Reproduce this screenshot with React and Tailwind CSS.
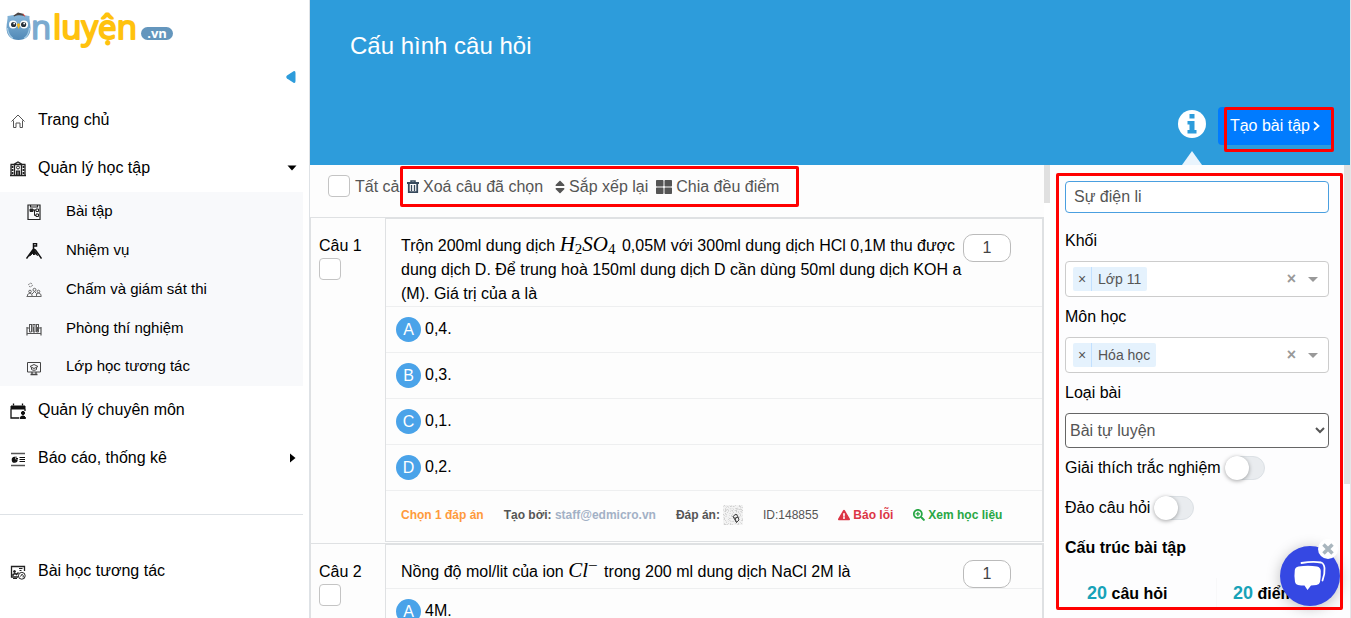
import React from "react";
import {
  FaSort,
  FaThLarge,
  FaExclamationTriangle,
  FaSearchPlus,
} from "react-icons/fa";

function Logo() {
  return (
    <svg width="170" height="44" viewBox="0 0 170 44" role="img" aria-label="Ôn luyện .vn">
      <defs>
        <linearGradient id="owl" x1="0" y1="0" x2="0" y2="1">
          <stop offset="0" stopColor="#86b6da" />
          <stop offset="1" stopColor="#5088b6" />
        </linearGradient>
      </defs>
      <path d="M1.500 8C4 7.500 7 7 12.500 7S21 7.500 23.500 8C23 11 24.500 15 24.500 20C24.500 28 19.500 32 12.500 32S0.500 28 0.500 20C0.500 15 2 11 1.500 8Z" fill="url(#owl)" />
      <path d="M7.500 7.500L12 4.500L18 6V8C15 7 11 7 8 8.500Z" fill="#4a4545" />
      <path d="M17 6L19 8.500" stroke="#d9534f" strokeWidth="1.200" />
      <circle cx="7" cy="16.500" r="4" fill="#fff" />
      <circle cx="18" cy="16.500" r="4" fill="#fff" />
      <circle cx="7.600" cy="16.500" r="2.600" fill="#26303b" />
      <circle cx="17.600" cy="16.500" r="2.600" fill="#26303b" />
      <circle cx="8.200" cy="15.500" r="0.900" fill="#fff" />
      <circle cx="18.200" cy="15.500" r="0.900" fill="#fff" />
      <path d="M10.800 16.500L12.500 15L14.300 16.500L12.600 21Z" fill="#f6b51e" />
      <path d="M1.500 20C2 25 4 28.500 7 30.500M23.500 20C23 25 21 28.500 18 30.500" stroke="#a5cce6" strokeWidth="1.200" fill="none" />
      <text x="25" y="31" fontFamily="Open Sans, sans-serif" fontWeight="400" fontSize="33" fill="#7aaacf" stroke="#7aaacf" strokeWidth="1.600" strokeLinejoin="round">n</text>
      <text x="47" y="31" fontFamily="Open Sans, sans-serif" fontWeight="400" fontSize="33" fill="#ffc20e" stroke="#ffc20e" strokeWidth="2" strokeLinejoin="round">luyện</text>
      <rect x="135" y="19" width="32" height="13" rx="6.500" fill="#6496bd" />
      <text x="151" y="29.500" textAnchor="middle" fontFamily="Open Sans, sans-serif" fontWeight="700" fontSize="13" fill="#fff">.vn</text>
    </svg>
  );
}

function Glyph({ children, color = "#222" }) {
  return (
    <svg className="size-4 shrink-0" viewBox="0 0 16 16" fill="none" stroke={color} strokeWidth="1" aria-hidden="true">
      {children}
    </svg>
  );
}

const HomeGlyph = () => (
  <Glyph color="#555">
    <path d="M1.500 8.500L8 2L14.500 8.500M3.500 7.500V14.500H6V10H10V14.500H12.500V7.500" />
  </Glyph>
);
const SchoolGlyph = () => (
  <Glyph>
    <path d="M0.500 3.500H15.500M1 3.500V14.500H15V3.500M4.500 3.500V14.500M11.500 3.500V14.500M3.500 3.500L8 1L12.500 3.500M0 14.500H16" strokeWidth="1.300" />
    <path d="M2.500 5V13.500M13.500 5V13.500" strokeDasharray="2 1" strokeWidth="1.800" />
    <path d="M6.500 14V10H9.500V14M8 10V14" strokeWidth="1.200" />
    <circle cx="8" cy="6.500" r="1.500" />
  </Glyph>
);
const TaskGlyph = () => (
  <Glyph>
    <path d="M2 1H14V15.500H2ZM4.500 1V3H11.500V1" strokeWidth="1.200" />
    <path d="M4 5H7V7.500H4Z" fill="#222" />
    <path d="M7 6H10M8.500 6V11.500H10M10 5H12.500V7.500H10ZM10 10H12.500V12.500H10Z" />
  </Glyph>
);
const MissionGlyph = () => (
  <Glyph color="#111">
    <path d="M0.500 15.500L7.500 6V0.500H10.500V3H8M7.500 6L9.500 7L15.500 15.500" strokeWidth="1.500" />
    <path d="M5.500 9L7.500 6.500L10.500 10L11.500 12.500L9 10.500L8 12L6.500 10.500L3.500 13Z" fill="#111" />
  </Glyph>
);
const ExamGlyph = () => (
  <Glyph color="#666">
    <circle cx="4.500" cy="3" r="1.800" strokeDasharray="1.500 1" />
    <circle cx="4" cy="9.500" r="1.300" />
    <circle cx="8.500" cy="7.800" r="1.500" />
    <circle cx="12.500" cy="9.500" r="1.300" />
    <path d="M0.500 14.500H15.500M1.500 14V12.500L4 11L6 12.500V14M6 12L8.500 9.500L10.500 11.500V14M11 12L12.500 11L15 12.500V14" />
  </Glyph>
);
const LabGlyph = () => (
  <Glyph color="#555">
    <path d="M1 6V14.500M15 6V14.500M1 12.500H15M1 7H3M13 7H15" strokeWidth="1.200" />
    <path d="M3.500 3.500V11H5.500V3.500M7 3.500V11H9V3.500M10.500 3.500V11H12.500V3.500M3 3.500H6M6.500 3.500H9.500M10 3.500H13M7.500 6V10.500M11.500 6V10.500" />
  </Glyph>
);
const ClassGlyph = () => (
  <Glyph color="#444">
    <path d="M1.500 2.500H14.500V12H1.500Z" />
    <path d="M6 12V14.500H10V12M4.500 14.500H11.500" strokeWidth="1.300" />
    <path d="M4 6.500L8 4.500L12 6.500L8 8.500ZM5.500 7.500V9.500C7 10.500 9 10.500 10.500 9.500V7.500" />
  </Glyph>
);
const CalendarGlyph = () => (
  <Glyph color="#111">
    <path d="M1 3H15V6H1Z" fill="#111" />
    <path d="M3.500 0.500V2.500M12.500 0.500V2.500M1 6V15H9M15 6V8" strokeWidth="1.300" />
    <circle cx="13" cy="10" r="1.600" fill="#111" />
    <path d="M10 15.500V14.500L12 13H14L15.500 14.500V15.500Z" fill="#111" />
  </Glyph>
);
const ReportGlyph = () => (
  <Glyph color="#111">
    <path d="M1 2.500H15M1 14.500H15" strokeWidth="1.400" stroke="#555" />
    <path d="M9.500 6.500H15M9.500 8.500H15M9.500 10.500H15" strokeWidth="1.200" />
    <path d="M4.500 6.500A2.300 2.300 0 1 0 7 9H4.500Z" fill="#111" strokeWidth="1.400" />
    <path d="M6 5.500V7.500H8" />
  </Glyph>
);
const LessonGlyph = () => (
  <Glyph color="#222">
    <path d="M8 13H1.500V2.500H14.500V7" strokeWidth="1.300" />
    <path d="M9 4.500H12.500M9.500 6.500H11.500M3 14.500H7" />
    <circle cx="4.500" cy="7.500" r="1" fill="#222" />
    <path d="M3 12V10.500L5 9.500L6.500 10.500L8.500 8.500" strokeWidth="1.500" />
    <circle cx="11.800" cy="11.800" r="3.400" />
    <path d="M10.500 12.500L12 10.200L13.200 11.500V13.500" />
  </Glyph>
);

const TrashGlyph = () => (
  <svg width="12" height="14" viewBox="0 0 12 14" fill="none" stroke="#36495c" aria-hidden="true">
    <path d="M0 3H12" strokeWidth="2" />
    <path d="M4 2.500V1H8V2.500" strokeWidth="1.500" />
    <path d="M1.800 4V12.200H10.200V4" strokeWidth="1.800" />
    <path d="M4.500 5V11M7.500 5V11" strokeWidth="1.300" />
  </svg>
);

const InfoGlyph = () => (
  <svg width="28" height="28" viewBox="0 0 28 28" aria-hidden="true">
    <circle cx="14" cy="14" r="14" fill="#fff" />
    <path d="M11.500 4H16.500V8.500H11.500ZM9.500 11H16.500V20H18.500V23.500H9.500V20H11.500V14.500H9.500Z" fill="#2d9cdb" />
  </svg>
);

const SUB_ITEMS = [
  ["Bài tập", TaskGlyph],
  ["Nhiệm vụ", MissionGlyph],
  ["Chấm và giám sát thi", ExamGlyph],
  ["Phòng thí nghiệm", LabGlyph],
  ["Lớp học tương tác", ClassGlyph],
];

function NavItem({ icon: Icon, label, children }) {
  return (
    <a href="#" className="flex h-12 items-center gap-3 pl-2.5 pr-1.5 text-base text-black">
      <span className="pt-0.5"><Icon /></span>
      <span className="flex-1">{label}</span>
      {children}
    </a>
  );
}

function Sidebar() {
  return (
    <aside className="flex w-[310px] shrink-0 flex-col border-r border-[#dee2e6] bg-white pr-1.5">
      <a href="#" className="mt-2 ml-[6px] block w-[170px]"><Logo /></a>
      <div className="flex h-11 items-center justify-end pr-[7px] pt-1.5">
        <button type="button" aria-label="Thu gọn" className="block">
          <svg width="10" height="12" viewBox="0 0 10 12"><path d="M7.500 0.300Q9.500 -0.500 9.500 2V10Q9.500 12.500 7.500 11.700L1 7.500Q-0.500 6 1 4.500Z" fill="#2d9cdb" /></svg>
        </button>
      </div>
      <nav>
        <NavItem icon={HomeGlyph} label="Trang chủ" />
        <NavItem icon={SchoolGlyph} label="Quản lý học tập">
          <svg width="10" height="6" viewBox="0 0 10 6"><path d="M0.500 0.500H9.500L5 5.500Z" fill="#000" /></svg>
        </NavItem>
        <div className="grid h-[194px] grid-rows-5 bg-[#f8f9fb]">
          {SUB_ITEMS.map(([label, Icon]) => (
            <a key={label} href="#" className="flex items-center gap-6 pl-[26px] text-[15px] text-black">
              <span className="pt-0.5"><Icon /></span>
              {label}
            </a>
          ))}
        </div>
        <NavItem icon={CalendarGlyph} label="Quản lý chuyên môn" />
        <NavItem icon={ReportGlyph} label="Báo cáo, thống kê">
          <svg width="8" height="10" viewBox="0 0 8 10"><path d="M1 0.500V9.500L6.500 5Z" fill="#000" /></svg>
        </NavItem>
        <hr className="mb-8 mt-8 border-[#dee2e6]" />
        <NavItem icon={LessonGlyph} label="Bài học tương tác" />
      </nav>
    </aside>
  );
}

function Check({ label }) {
  return (
    <input type="checkbox" aria-label={label} className="block size-[22px] shrink-0 appearance-none rounded border border-[#c4c4c4] bg-white" />
  );
}

function Highlight({ className }) {
  return <div aria-hidden="true" className={"pointer-events-none absolute z-10 rounded-xs border-3 border-[#ff0000] " + className} />;
}

function Toolbar() {
  return (
    <div className="flex h-[52px] items-start pl-[18px] pt-2.5 text-base leading-6 text-[#555]">
      <label className="flex w-[72px] shrink-0 gap-[5px] whitespace-nowrap">
        <Check label="Tất cả" />
        Tất cả
      </label>
      <div className="relative flex h-6 w-[399px] shrink-0 items-center whitespace-nowrap pl-[7px]">
        <button type="button" className="mr-3 flex items-center gap-1"><TrashGlyph />Xoá câu đã chọn</button>
        <button type="button" className="mr-2 flex items-center gap-1"><FaSort className="h-4 w-2.5" />Sắp xếp lại</button>
        <button type="button" className="flex items-center gap-1"><FaThLarge className="size-4" />Chia đều điểm</button>
        <Highlight className="inset-x-0 -top-[9px] h-[41px]" />
      </div>
    </div>
  );
}

function Answer({ letter, text }) {
  return (
    <li className="flex h-[46px] items-center gap-1 border-b border-[#eeeff0] pl-2.5">
      <span className="flex size-[25px] items-center justify-center rounded-full bg-[#4aa3e9] text-base text-white">{letter}</span>
      <span className="pb-0.5">{text}</span>
    </li>
  );
}

const NOISE = Array.from({ length: 400 }, (_, i) => {
  const v = Math.abs(Math.sin(i * 12.9898) * 43758.5453) % 1;
  return v > 0.55 ? { x: i % 20, y: Math.floor(i / 20), o: (v - 0.5) * 0.6 } : null;
}).filter(Boolean);

function AnswerThumb() {
  return (
    <svg width="20" height="20" viewBox="0 0 20 20" role="img" aria-label="Đáp án B">
      <rect width="20" height="20" fill="#f3f3f3" />
      {NOISE.map((n) => (
        <rect key={n.x + "-" + n.y} x={n.x} y={n.y} width="1" height="1" fill="#777" opacity={n.o} />
      ))}
      <g fill="none" stroke="#444" strokeWidth="1">
        <path d="M10 11.500L13 9L15 11.500L12 13.500ZM12 13.500L15 12L16 15L13.500 17.500ZM10 11.500L13.500 17.500" />
      </g>
    </svg>
  );
}

function QuestionFooter() {
  return (
    <div className="flex h-[50px] items-center gap-5 whitespace-nowrap pb-0.5 pl-[15px] text-xs font-bold text-[#555]">
      <span className="text-[#ff9a3c]">Chọn 1 đáp án</span>
      <span>Tạo bởi: <span className="text-[#a3b1c6]">staff@edmicro.vn</span></span>
      <span className="flex items-center gap-[3px]">Đáp án: <AnswerThumb /></span>
      <span className="font-normal">ID:148855</span>
      <button type="button" className="flex items-center gap-[3px] text-[#dc3545]"><FaExclamationTriangle className="size-3" />Báo lỗi</button>
      <button type="button" className="flex items-center gap-[3px] text-[#28a745]"><FaSearchPlus className="size-3" />Xem học liệu</button>
    </div>
  );
}

function Question({ number, answers, footer, children }) {
  return (
    <section className="flex border-l border-t border-[#dfe1e3] pb-px">
      <div className="w-[74px] shrink-0 pl-2 pt-4 leading-6">
        <div>Câu {number}</div>
        <Check label={"Chọn câu " + number} />
      </div>
      <div className="min-w-0 flex-1 border border-r-2 border-[#dfe1e3]">
        <div className="flex border-b border-[#eeeff0] pl-[15px]">
          <p className="min-w-0 flex-1 pt-[15px] leading-6">{children}</p>
          <input type="text" defaultValue="1" aria-label={"Điểm câu " + number} className="mr-[31px] mt-[15px] h-7 w-12 shrink-0 rounded-[10px] border border-[#bbb] bg-white text-center text-base text-[#444]" />
        </div>
        <ul>
          {answers.map(([letter, text]) => <Answer key={letter} letter={letter} text={text} />)}
        </ul>
        {footer && <QuestionFooter />}
      </div>
    </section>
  );
}

const MATH = "mr-0.5 font-['Liberation_Serif',serif] text-[21px] italic leading-none";

function TagSelect({ label, value }) {
  return (
    <div role="group" aria-label={label} className="flex h-9 items-center rounded border border-[#ccc] bg-white pl-[7px] pr-2.5 text-sm text-[#555]">
      <span className="flex h-6 items-stretch rounded-xs bg-[#e5f2fd]">
        <button type="button" aria-label={"Xoá " + value} className="w-[19px] border-r border-[#c2e0ff]">×</button>
        <span className="px-1.5 leading-6">{value}</span>
      </span>
      <button type="button" aria-label={"Xoá hết " + label} className="ml-auto text-base font-bold leading-none text-[#999]">×</button>
      <svg className="ml-3" width="10" height="5" viewBox="0 0 10 5"><path d="M0 0H10L5 5Z" fill="#999" /></svg>
    </div>
  );
}

function Toggle({ id, label }) {
  return (
    <div className="flex h-6 items-center gap-1">
      <label htmlFor={id}>{label}</label>
      <input id={id} type="checkbox" role="switch" className="h-6 w-10 appearance-none rounded-full border border-[#dce1e5] bg-[#e9ecef] before:-ml-px before:-mt-px before:block before:size-6 before:rounded-full before:bg-white before:shadow-[0_1px_4px_rgba(0,0,0,0.35)]" />
    </div>
  );
}

function SettingsPanel() {
  return (
    <aside className="relative flex w-[300px] shrink-0 bg-[#fdfdfe]">
      <form className="flex min-w-0 flex-1 flex-col pl-[15px] pr-[15px] pt-4">
        <input type="text" aria-label="Tên bài tập" defaultValue="Sự điện li" className="h-8 shrink-0 rounded border border-[#4a9fe0] bg-white px-2 text-[#555]" />
        <div className="mb-2 mt-4 leading-6">Khối</div>
        <TagSelect label="Khối" value="Lớp 11" />
        <div className="my-2 leading-6">Môn học</div>
        <TagSelect label="Môn học" value="Hóa học" />
        <label htmlFor="kind" className="my-2 leading-6">Loại bài</label>
        <select id="kind" className="mb-2 h-[35px] shrink-0 rounded border border-[#666] bg-white text-[#555]">
          <option>Bài tự luyện</option>
        </select>
        <div className="flex flex-col gap-4">
          <Toggle id="explain" label="Giải thích trắc nghiệm" />
          <Toggle id="shuffle" label="Đảo câu hỏi" />
        </div>
        <h2 className="mt-4 font-bold leading-6">Cấu trúc bài tập</h2>
        <div className="mt-[18px] flex whitespace-nowrap font-bold leading-[30px]">
          <div className="w-[152px] border-r border-[#f8f8f9] pl-[22px]"><span className="text-lg leading-[30px] text-[#17a2b8]">20</span> câu hỏi</div>
          <div className="pl-4"><span className="text-lg leading-[30px] text-[#17a2b8]">20</span> điểm</div>
        </div>
      </form>
      <div className="h-[319px] w-1.5 shrink-0 bg-[#e0e0e0]" />
      <Highlight className="left-1.5 right-[7px] top-2 h-[437px]" />
    </aside>
  );
}

function ChatWidget() {
  return (
    <div className="fixed bottom-3 right-[11px]">
      <button type="button" aria-label="Trò chuyện" className="flex size-15 items-center justify-center rounded-full bg-[#3548e3] shadow-[0_2px_14px_rgba(0,0,0,0.25)]">
        <svg width="34" height="32" viewBox="0 0 34 32">
          <path d="M8.500 3Q20 1 28 2.500Q31 3.500 31.500 8Q32 14 29.500 20.500" fill="none" stroke="#fff" strokeWidth="1.800" strokeLinecap="round" />
          <path d="M5.500 6.500Q15 4.800 24 6.500Q27.500 7 27.800 11Q28 17 27 22Q26.500 24.500 23.500 25Q21 25.300 18 25.500L14.500 30L11.500 25.500Q8 25.500 5 25Q2.500 24.500 2 22Q1 16 1.800 10Q2.200 7 5.500 6.500Z" fill="#fff" />
        </svg>
      </button>
      <button type="button" aria-label="Đóng" className="absolute -top-[7px] left-[38px] flex size-5 items-center justify-center rounded-full bg-white">
        <svg width="12" height="12" viewBox="0 0 12 12"><path d="M1.500 1.500L10.500 10.500M10.500 1.500L1.500 10.500" stroke="#a9b6be" strokeWidth="3.500" /></svg>
      </button>
    </div>
  );
}

export default function App() {
  return (
    <div className="flex h-screen overflow-hidden bg-white font-['Liberation_Sans',sans-serif] text-base text-black">
      <Sidebar />
      <main className="flex min-w-0 flex-1 flex-col border-r border-[#e4e6e8]">
        <header className="flex h-[165px] shrink-0 flex-col justify-between bg-[#2d9cdb] pb-5 pl-10 pr-4 pt-[30px]">
          <h1 className="text-2xl leading-8 text-white">Cấu hình câu hỏi</h1>
          <div className="flex items-start justify-end gap-3">
            <div className="relative mt-[3px]">
              <button type="button" aria-label="Thông tin" className="block"><InfoGlyph /></button>
              <svg className="absolute left-1 top-[41px]" width="20" height="14" viewBox="0 0 20 14"><path d="M10 0L20 14H0Z" fill="#e9f4fd" /></svg>
            </div>
            <div className="relative">
              <button type="button" className="flex h-[38px] items-center whitespace-nowrap rounded bg-[#007bff] px-3 text-white">Tạo bài tập
                <svg width="12" height="12" viewBox="0 0 12 12" fill="none" aria-hidden="true"><path d="M4 2L8.500 6L4 10" stroke="#fff" strokeWidth="1.800" /></svg>
              </button>
              <Highlight className="left-1.5 right-0 top-0 h-[45px]" />
            </div>
          </div>
        </header>
        <div className="flex min-h-0 flex-1">
          <div className="flex min-w-0 flex-1 overflow-hidden">
            <div className="min-w-0 flex-1 bg-[#fdfdfd]">
              <Toolbar />
              <Question number={1} footer answers={[["A", "0,4."], ["B", "0,3."], ["C", "0,1."], ["D", "0,2."]]}>
                Trộn 200ml dung dịch{" "}
                <span className={MATH}>H<sub className="relative top-[3px] bottom-auto align-baseline text-[15px] not-italic leading-none">2</sub>SO<sub className="relative top-[3px] bottom-auto align-baseline text-[15px] not-italic leading-none">4</sub></span>{" "}
                0,05M với 300ml dung dịch HCl 0,1M thu được dung dịch D. Để trung hoà 150ml dung dịch D cần dùng 50ml dung dịch KOH a (M). Giá trị của a là
              </Question>
              <Question number={2} answers={[["A", "4M."]]}>
                Nồng độ mol/lit của ion{" "}
                <span className={MATH}>Cl<sup className="relative -top-1.5 align-baseline text-[17px] not-italic leading-none">−</sup></span>{" "}
                trong 200 ml dung dịch NaCl 2M là
              </Question>
            </div>
            <div className="h-[38px] w-1.5 shrink-0 bg-[#e0e0e0]" />
          </div>
          <SettingsPanel />
        </div>
      </main>
      <ChatWidget />
    </div>
  );
}
